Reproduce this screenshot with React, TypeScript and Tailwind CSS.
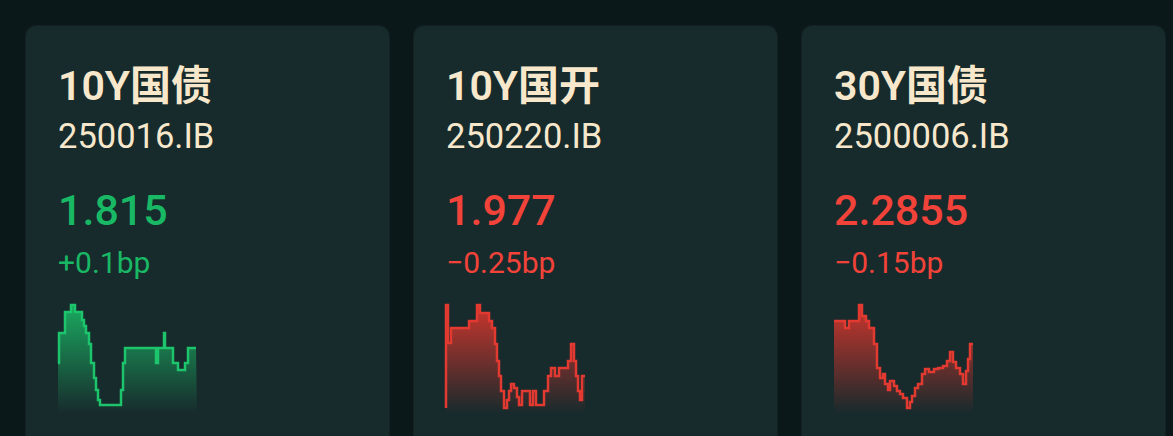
import { useId } from "react";

type Seg = [number, number]; // [x end, y]

type Bond = {
  name: string;
  code: string;
  yieldValue: string;
  change: string;
  up: boolean;
  start: number;
  segs: Seg[];
};

const bonds: Bond[] = [
  {
    name: "10Y国债",
    code: "250016.IB",
    yieldValue: "1.815",
    change: "+0.1bp",
    up: true,
    start: 59,
    segs: [
      [1, 59], [3, 29], [7, 29], [9, 8], [13, 8], [14, 1], [17, 1], [18, 8],
      [24, 8], [26, 16], [28, 22], [31, 29], [33, 40], [36, 59], [38, 74],
      [40, 86], [42, 96], [63, 101], [65, 86], [67, 59], [69, 44], [98, 44],
      [100, 59], [102, 44], [106, 44], [107, 29], [109, 44], [115, 44],
      [117, 59], [120, 59], [122, 66], [127, 66], [130, 59], [132, 44],
      [138, 44],
    ],
  },
  {
    name: "10Y国开",
    code: "250220.IB",
    yieldValue: "1.977",
    change: "−0.25bp",
    up: false,
    start: 104,
    segs: [
      [2, 1], [5, 39], [10, 24], [23, 24], [27, 17], [31, 17], [34, 1],
      [38, 9], [43, 9], [46, 17], [49, 24], [51, 40], [53, 57], [55, 72],
      [58, 87], [61, 104], [63, 96], [65, 87], [68, 80], [71, 84], [73, 93],
      [76, 101], [79, 87], [84, 87], [87, 101], [90, 87], [94, 101],
      [98, 101], [102, 87], [105, 72], [109, 64], [113, 72], [117, 64],
      [122, 64], [125, 57], [128, 40], [130, 57], [132, 72], [134, 87],
      [136, 96], [139, 72],
    ],
  },
  {
    name: "30Y国债",
    code: "2500006.IB",
    yieldValue: "2.2855",
    change: "−0.15bp",
    up: false,
    start: 17,
    segs: [
      [11, 17], [15, 24], [25, 17], [28, 1], [32, 12], [35, 17], [40, 24],
      [43, 40], [46, 64], [49, 74], [51, 70], [54, 80], [56, 86], [60, 77],
      [63, 82], [66, 87], [69, 90], [73, 94], [76, 104], [78, 98], [81, 92],
      [84, 84], [88, 80], [91, 70], [95, 65], [100, 68], [104, 65],
      [109, 64], [113, 62], [116, 57], [119, 48], [122, 58], [126, 64],
      [129, 70], [132, 80], [134, 67], [136, 55], [139, 40],
    ],
  },
];

const Sparkline = ({ segs, start, up }: { segs: Seg[]; start: number; up: boolean }) => {
  const id = useId().replace(/:/g, "");
  const stroke = up ? "#1cc46b" : "#e23a31";
  const fill = up ? "#1aa95f" : "#cc352d";
  const w = 139;
  const h = 110;

  let d = `M0 ${start}`;
  let prevX = 0;
  let prevY = start;
  for (const [x, y] of segs) {
    if (y !== prevY) d += ` L${prevX} ${y}`;
    d += ` L${x} ${y}`;
    prevX = x;
    prevY = y;
  }
  const area = `${d} L${w} ${h} L0 ${h} Z`;

  return (
    <svg width={w} height={h} viewBox={`0 0 ${w} ${h}`} className="block overflow-visible">
      <defs>
        <linearGradient id={`g${id}`} x1="0" y1="0" x2="0" y2="1">
          <stop offset="0%" stopColor={fill} stopOpacity="1" />
          <stop offset="100%" stopColor={fill} stopOpacity="0" />
        </linearGradient>
      </defs>
      <path d={area} fill={`url(#g${id})`} />
      <path d={d} fill="none" stroke={stroke} strokeWidth="2.5" strokeLinejoin="miter" />
    </svg>
  );
};

const BondCard = ({ bond }: { bond: Bond }) => {
  const color = bond.up ? "text-[#19b865]" : "text-[#f2433a]";
  return (
    <div className="flex h-[440px] w-[363px] shrink-0 flex-col rounded-[10px] bg-[#172a2c] px-[32px] pt-[32px] ring-1 ring-white/[0.04]">
      <p className="text-[41px] leading-[56px] font-semibold text-[#f7e8cc]">{bond.name}</p>
      <p className="text-[34.5px] leading-[44px] text-[#f7e8cc]">{bond.code}</p>
      <p className={`mt-[24px] text-[43px] leading-[56px] font-medium ${color}`}>
        {bond.yieldValue}
      </p>
      <p className={`mt-[5px] text-[30px] leading-[40px] ${color}`}>{bond.change}</p>
      <div className="mt-[21px]">
        <Sparkline segs={bond.segs} start={bond.start} up={bond.up} />
      </div>
    </div>
  );
};

export default function App() {
  return (
    <div
      className="flex h-[436px] w-[1173px] gap-[25px] overflow-hidden bg-[#0a1819] pl-[26px] pt-[26px]"
      style={{ fontFamily: "Roboto, 'Noto Sans CJK SC', sans-serif" }}
    >
      {bonds.map((b) => (
        <BondCard key={b.code} bond={b} />
      ))}
    </div>
  );
}
